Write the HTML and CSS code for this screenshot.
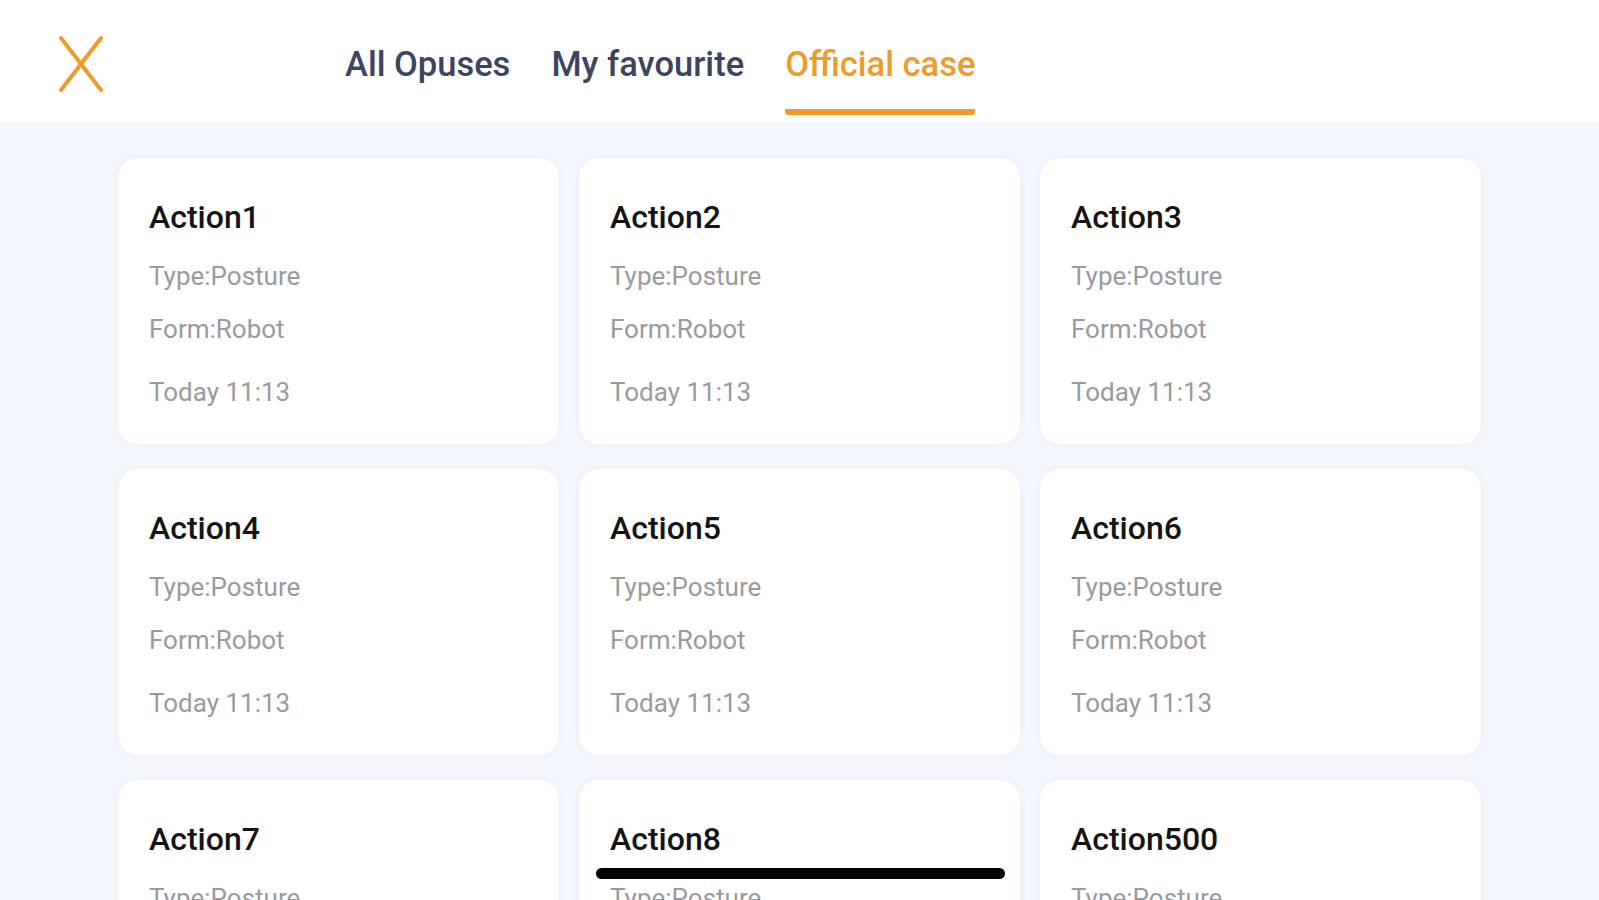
FILE: index.html
```html
<!doctype html>
<html>
<head>
<meta charset="utf-8">
<meta name="viewport" content="width=device-width, initial-scale=1">
<title>Official case</title>
<link rel="stylesheet" href="styles.css">
</head>
<body>

<div class="topBar">
	<a href="#" class="close" title="Close">
		<svg width="46" height="56" viewBox="0 0 46 56">
			<path d="M3 2 L43 54 M43 2 L3 54" stroke="#f19a2c" stroke-width="4" stroke-linecap="round" fill="none"/>
		</svg>
	</a>
	<div class="tabs">
		<a href="#" class="tab">All Opuses</a>
		<a href="#" class="tab">My favourite</a>
		<a href="#" class="tab active">Official case</a>
	</div>
</div>

<div class="list">
	<div class="card">
		<div class="name">Action1</div>
		<div class="info">Type:Posture</div>
		<div class="info">Form:Robot</div>
		<div class="info time">Today 11:13</div>
	</div>
	<div class="card">
		<div class="name">Action2</div>
		<div class="info">Type:Posture</div>
		<div class="info">Form:Robot</div>
		<div class="info time">Today 11:13</div>
	</div>
	<div class="card">
		<div class="name">Action3</div>
		<div class="info">Type:Posture</div>
		<div class="info">Form:Robot</div>
		<div class="info time">Today 11:13</div>
	</div>
	<div class="card">
		<div class="name">Action4</div>
		<div class="info">Type:Posture</div>
		<div class="info">Form:Robot</div>
		<div class="info time">Today 11:13</div>
	</div>
	<div class="card">
		<div class="name">Action5</div>
		<div class="info">Type:Posture</div>
		<div class="info">Form:Robot</div>
		<div class="info time">Today 11:13</div>
	</div>
	<div class="card">
		<div class="name">Action6</div>
		<div class="info">Type:Posture</div>
		<div class="info">Form:Robot</div>
		<div class="info time">Today 11:13</div>
	</div>
	<div class="card">
		<div class="name">Action7</div>
		<div class="info">Type:Posture</div>
		<div class="info">Form:Robot</div>
		<div class="info time">Today 11:13</div>
	</div>
	<div class="card">
		<div class="name">Action8</div>
		<div class="info">Type:Posture</div>
		<div class="info">Form:Robot</div>
		<div class="info time">Today 11:13</div>
	</div>
	<div class="card">
		<div class="name">Action500</div>
		<div class="info">Type:Posture</div>
		<div class="info">Form:Robot</div>
		<div class="info time">Today 11:13</div>
	</div>
</div>

<div class="homeBar"></div>

</body>
</html>
```

FILE: styles.css
```css
html, body {
	margin: 0;
	height: 100%;
	overflow: hidden;
}

body {
	font-family: Roboto, "Liberation Sans", sans-serif;
	background-color: #f4f7fd;
	color: #111111;
}

a {
	text-decoration: none;
}

.topBar {
	height: 122px;
	background: #ffffff;
	display: flex;
	align-items: stretch;
}

.close {
	display: flex;
	align-items: center;
	width: 345px;
	padding-left: 58px;
	padding-top: 6px;
	box-sizing: border-box;
}

.tabs {
	display: flex;
	gap: 41px;
}

.tab {
	display: flex;
	align-items: center;
	padding-top: 18px;
	font-size: 34.5px;
	font-weight: 500;
	color: #3c4462;
	border-bottom: 6px solid transparent;
	margin-bottom: 7px;
	box-sizing: border-box;
}

.tab.active {
	color: #f19a2c;
	border-bottom-color: #f19a2c;
	border-radius: 0 0 3px 3px;
}

.list {
	display: grid;
	grid-template-columns: repeat(3, 441px);
	grid-auto-rows: 286px;
	column-gap: 20px;
	row-gap: 25px;
	padding: 36px 118px 0 118px;
}

.card {
	background: #ffffff;
	border-radius: 20px;
	padding: 40px 31px 0 31px;
	box-shadow: 0 0 8px rgba(220, 228, 245, 0.6);
}

.name {
	font-size: 32px;
	font-weight: 500;
	line-height: 38px;
	color: #141414;
	margin-bottom: 25px;
}

.info {
	font-size: 26px;
	line-height: 30px;
	color: #9a9a9e;
	margin-bottom: 23px;
}

.info.time {
	margin-top: 33px;
}

.homeBar {
	position: fixed;
	left: 50%;
	bottom: 21px;
	width: 409px;
	height: 11px;
	margin-left: -204px;
	border-radius: 6px;
	background: #000000;
}
```
